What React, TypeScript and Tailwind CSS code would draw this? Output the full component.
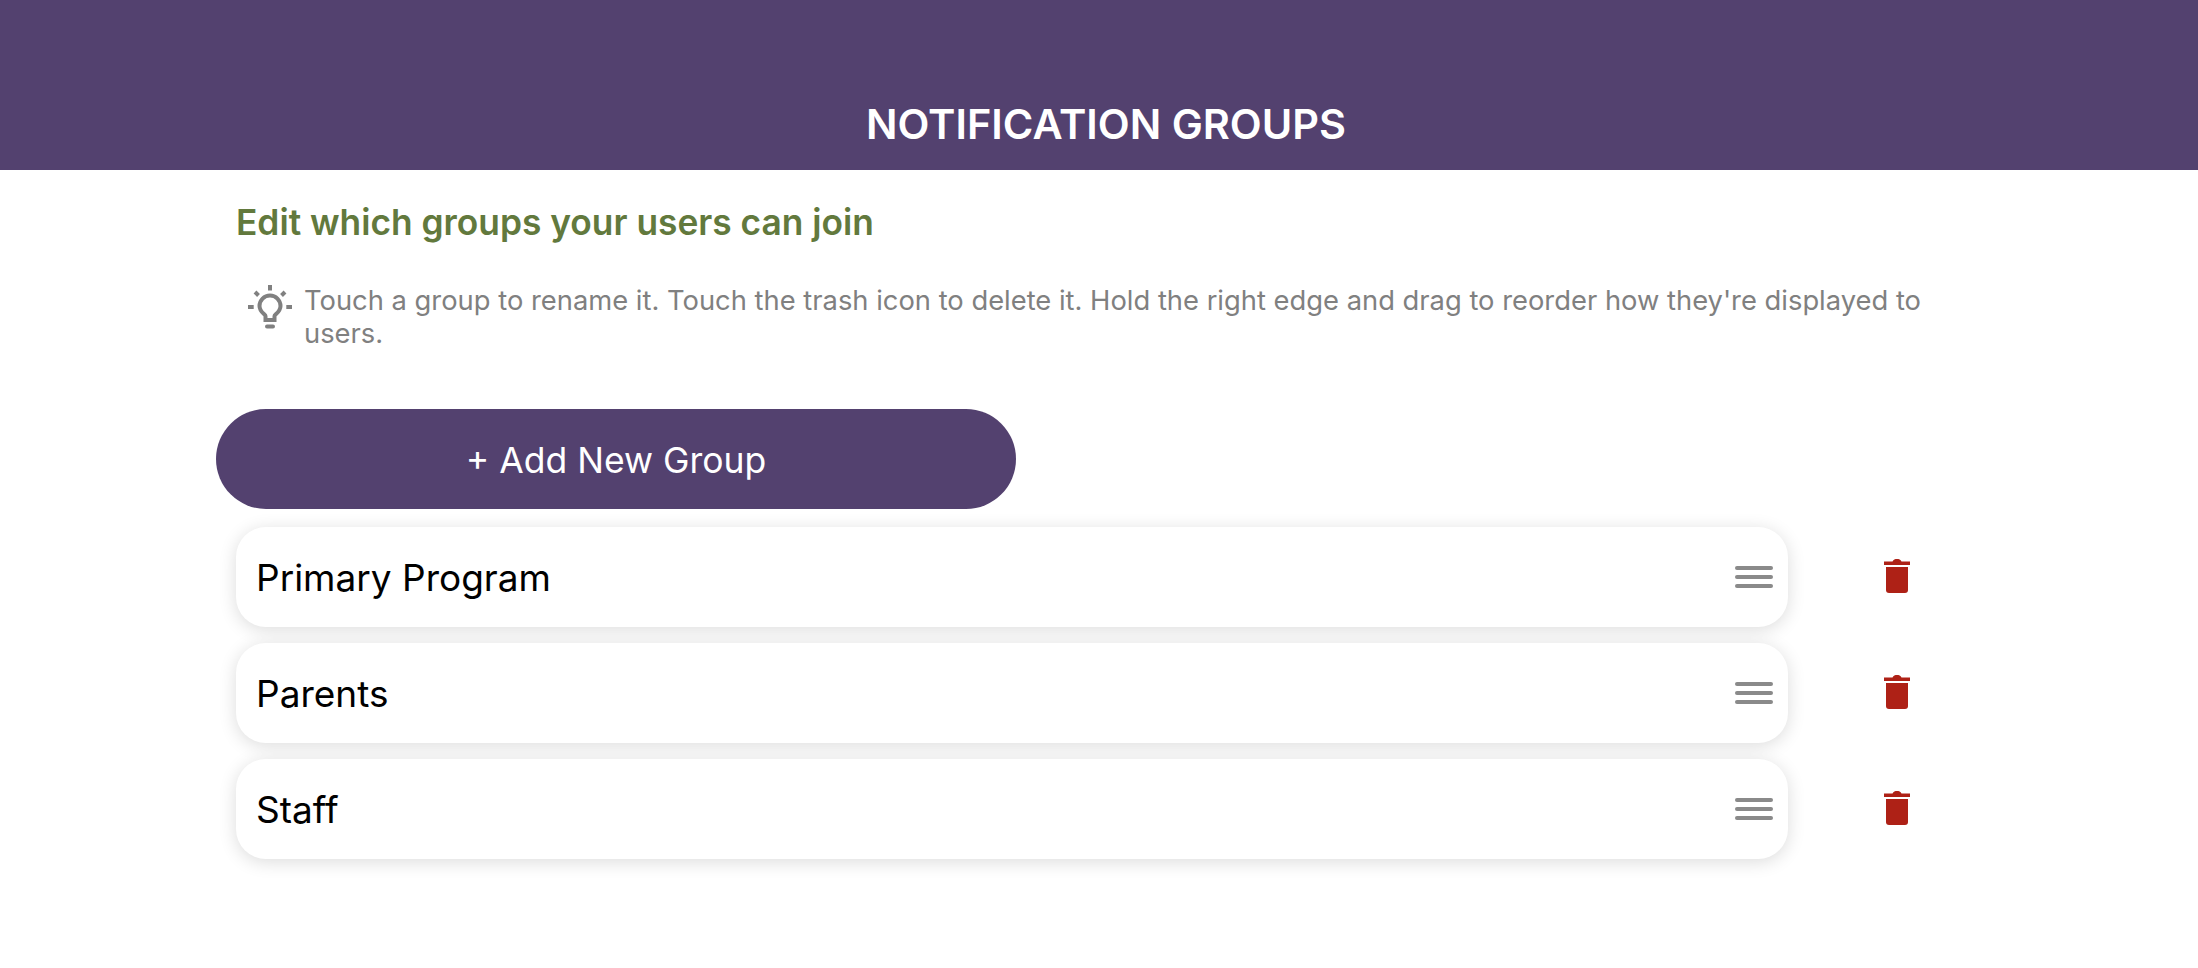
const groups = ['Primary Program', 'Parents', 'Staff']

function Bulb() {
  return (
    <svg width="44" height="44" viewBox="0 0 44 44" fill="none" stroke="#808080" className="shrink-0">
      <path d="M22 0v5.500M0 22h5.700M38.300 22H44M7 7l3.500 3.500M37 7l-3.500 3.500" strokeWidth="4" />
      <path d="M17.500 35v-4c0-1.500-6-4-6-10a10.500 10.500 0 0 1 21 0c0 6-6 8.500-6 10v4z" strokeWidth="4" />
      <path d="M19 41.500h6" strokeWidth="4" strokeLinecap="round" />
    </svg>
  )
}

function Trash() {
  return (
    <svg width="26" height="34" viewBox="0 0 26 34" fill="#ae2116">
      <path d="M0 2.500h8.500C9.500 0.600 11 0 13 0s3.500 0.600 4.500 2.500H26V6H0z" />
      <path d="M2 8h22v23a3 3 0 0 1-3 3H5a3 3 0 0 1-3-3z" />
    </svg>
  )
}

function Row({ name }: { name: string }) {
  return (
    <div className="flex items-center">
      <div className="flex h-[100px] w-[1552px] items-center justify-between rounded-[30px] bg-white pl-[20px] pr-[15px] shadow-[0_3px_18px_rgba(0,0,0,0.14)]">
        <span className="pt-[2px] text-[37px] text-black">{name}</span>
        <div className="flex w-[38px] flex-col gap-[5px]">
          <div className="h-[4px] rounded-full bg-[#8a8a8a]" />
          <div className="h-[4px] rounded-full bg-[#8a8a8a]" />
          <div className="h-[4px] rounded-full bg-[#8a8a8a]" />
        </div>
      </div>
      <div className="ml-[96px] mt-[-2px]">
        <Trash />
      </div>
    </div>
  )
}

export default function App() {
  return (
    <div className="h-[968px] w-full overflow-hidden bg-white font-['Inter',sans-serif]">
      <div className="flex h-[170px] items-end justify-center bg-[#53416f] pb-[21px] pl-[14px]">
        <h1 className="text-[41.500px] font-semibold leading-[50px] text-white">NOTIFICATION GROUPS</h1>
      </div>
      <div className="pl-[236px]">
        <h2 className="mt-[32px] text-[35.300px] font-semibold leading-[42px] text-[#62793d]">
          Edit which groups your users can join
        </h2>
        <div className="mt-[41px] flex w-[1700px] pl-[12px]">
          <Bulb />
          <p className="ml-[12px] mt-[-1px] text-[27.350px] leading-[33px] text-[#808080]">
            Touch a group to rename it. Touch the trash icon to delete it. Hold the right edge and drag to reorder how
            they're displayed to users.
          </p>
        </div>
        <button className="ml-[-20px] mt-[59px] block h-[100px] w-[800px] rounded-[50px] bg-[#53416f] pt-[3px] text-[35.500px] text-white">
          + Add New Group
        </button>
        <div className="mt-[18px] flex flex-col gap-[16px]">
          {groups.map((g) => (
            <Row key={g} name={g} />
          ))}
        </div>
      </div>
    </div>
  )
}
